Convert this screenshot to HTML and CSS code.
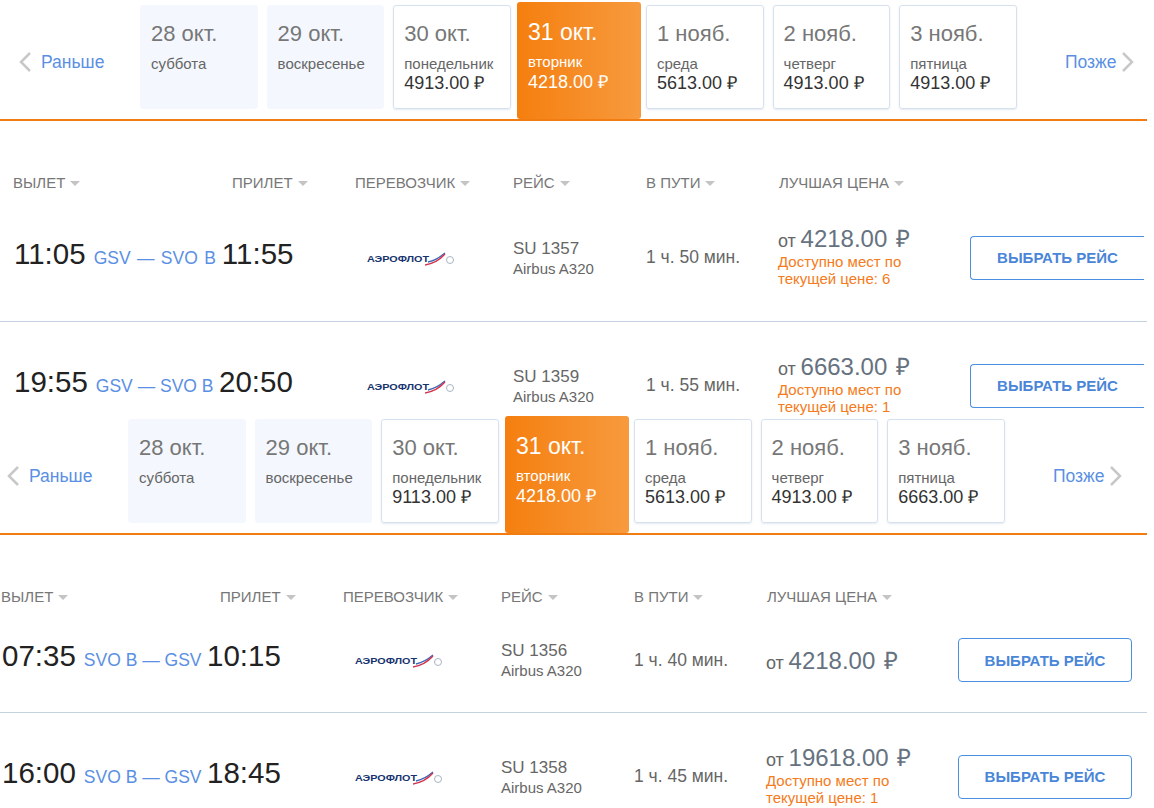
FILE: index.html
```html
<!DOCTYPE html>
<html lang="ru">
<head>
    <meta charset="UTF-8">
    <meta name="viewport" content="width=device-width, initial-scale=1.0">
    <title>Выбор рейса</title>
    <link rel="stylesheet" href="styles.css">
</head>
<body>
    <!-- GSV to SVO -->
    <section class="panel panel-top">
        <div class="strip">
            <a class="nav nav-prev"><svg class="chev" width="14" height="22" viewBox="0 0 14 22"><path d="M12 2 L3 11 L12 20"/></svg>Раньше</a>
            <div class="cards">
                <div class="card card-empty"><div class="date">28 окт.</div><div class="day">суббота</div></div>
                <div class="card card-empty"><div class="date">29 окт.</div><div class="day">воскресенье</div></div>
                <div class="card"><div class="date">30 окт.</div><div class="day">понедельник</div><div class="card-price">4913.00 ₽</div></div>
                <div class="card card-active"><div class="date">31 окт.</div><div class="day">вторник</div><div class="card-price">4218.00 ₽</div></div>
                <div class="card"><div class="date">1 нояб.</div><div class="day">среда</div><div class="card-price">5613.00 ₽</div></div>
                <div class="card"><div class="date">2 нояб.</div><div class="day">четверг</div><div class="card-price">4913.00 ₽</div></div>
                <div class="card"><div class="date">3 нояб.</div><div class="day">пятница</div><div class="card-price">4913.00 ₽</div></div>
            </div>
            <a class="nav nav-next">Позже<svg class="chev" width="14" height="22" viewBox="0 0 14 22"><path d="M2 2 L11 11 L2 20"/></svg></a>
        </div>

        <div class="head">
            <div class="col-dep">Вылет<i class="caret"></i></div>
            <div class="col-arr">Прилет<i class="caret"></i></div>
            <div class="col-carrier">Перевозчик<i class="caret"></i></div>
            <div class="col-flight">Рейс<i class="caret"></i></div>
            <div class="col-dur">В пути<i class="caret"></i></div>
            <div class="col-price">Лучшая цена<i class="caret"></i></div>
        </div>

        <div class="row">
            <div class="times"><span class="time">11:05</span><span class="route route-wide">GSV — SVO B</span><span class="time">11:55</span></div>
            <div class="carrier">
                <span class="logo"><span class="logo-name">АЭРОФЛОТ</span><svg class="logo-wing" width="30" height="14" viewBox="0 0 30 14"><path d="M3 10 Q12 8 20 1" fill="none" stroke="#3f66b8" stroke-width="1.4"/><path d="M0 13 Q12 11 20 2" fill="none" stroke="#d4344a" stroke-width="1.4"/><circle cx="25" cy="8" r="3.5" fill="none" stroke="#a9b4c2"/></svg></span>
            </div>
            <div class="flight"><div class="flight-no">SU 1357</div><div class="plane">Airbus A320</div></div>
            <div class="dur">1 ч. 50 мин.</div>
            <div class="price"><div class="price-line"><span class="from">от</span> 4218.00 <span class="rub">₽</span></div><div class="seats">Доступно мест по<br>текущей цене: 6</div></div>
            <button class="btn">ВЫБРАТЬ РЕЙС</button>
        </div>

        <div class="row">
            <div class="times"><span class="time">19:55</span><span class="route">GSV — SVO B</span><span class="time">20:50</span></div>
            <div class="carrier">
                <span class="logo"><span class="logo-name">АЭРОФЛОТ</span><svg class="logo-wing" width="30" height="14" viewBox="0 0 30 14"><path d="M3 10 Q12 8 20 1" fill="none" stroke="#3f66b8" stroke-width="1.4"/><path d="M0 13 Q12 11 20 2" fill="none" stroke="#d4344a" stroke-width="1.4"/><circle cx="25" cy="8" r="3.5" fill="none" stroke="#a9b4c2"/></svg></span>
            </div>
            <div class="flight"><div class="flight-no">SU 1359</div><div class="plane">Airbus A320</div></div>
            <div class="dur">1 ч. 55 мин.</div>
            <div class="price"><div class="price-line"><span class="from">от</span> 6663.00 <span class="rub">₽</span></div><div class="seats">Доступно мест по<br>текущей цене: 1</div></div>
            <button class="btn">ВЫБРАТЬ РЕЙС</button>
        </div>
    </section>

    <!-- SVO to GSV -->
    <section class="panel panel-bottom">
        <div class="strip">
            <a class="nav nav-prev"><svg class="chev" width="14" height="22" viewBox="0 0 14 22"><path d="M12 2 L3 11 L12 20"/></svg>Раньше</a>
            <div class="cards">
                <div class="card card-empty"><div class="date">28 окт.</div><div class="day">суббота</div></div>
                <div class="card card-empty"><div class="date">29 окт.</div><div class="day">воскресенье</div></div>
                <div class="card"><div class="date">30 окт.</div><div class="day">понедельник</div><div class="card-price">9113.00 ₽</div></div>
                <div class="card card-active"><div class="date">31 окт.</div><div class="day">вторник</div><div class="card-price">4218.00 ₽</div></div>
                <div class="card"><div class="date">1 нояб.</div><div class="day">среда</div><div class="card-price">5613.00 ₽</div></div>
                <div class="card"><div class="date">2 нояб.</div><div class="day">четверг</div><div class="card-price">4913.00 ₽</div></div>
                <div class="card"><div class="date">3 нояб.</div><div class="day">пятница</div><div class="card-price">6663.00 ₽</div></div>
            </div>
            <a class="nav nav-next">Позже<svg class="chev" width="14" height="22" viewBox="0 0 14 22"><path d="M2 2 L11 11 L2 20"/></svg></a>
        </div>

        <div class="head">
            <div class="col-dep">Вылет<i class="caret"></i></div>
            <div class="col-arr">Прилет<i class="caret"></i></div>
            <div class="col-carrier">Перевозчик<i class="caret"></i></div>
            <div class="col-flight">Рейс<i class="caret"></i></div>
            <div class="col-dur">В пути<i class="caret"></i></div>
            <div class="col-price">Лучшая цена<i class="caret"></i></div>
        </div>

        <div class="row">
            <div class="times"><span class="time">07:35</span><span class="route">SVO B — GSV</span><span class="time">10:15</span></div>
            <div class="carrier">
                <span class="logo"><span class="logo-name">АЭРОФЛОТ</span><svg class="logo-wing" width="30" height="14" viewBox="0 0 30 14"><path d="M3 10 Q12 8 20 1" fill="none" stroke="#3f66b8" stroke-width="1.4"/><path d="M0 13 Q12 11 20 2" fill="none" stroke="#d4344a" stroke-width="1.4"/><circle cx="25" cy="8" r="3.5" fill="none" stroke="#a9b4c2"/></svg></span>
            </div>
            <div class="flight"><div class="flight-no">SU 1356</div><div class="plane">Airbus A320</div></div>
            <div class="dur">1 ч. 40 мин.</div>
            <div class="price"><div class="price-line"><span class="from">от</span> 4218.00 <span class="rub">₽</span></div></div>
            <button class="btn">ВЫБРАТЬ РЕЙС</button>
        </div>

        <div class="row">
            <div class="times"><span class="time">16:00</span><span class="route">SVO B — GSV</span><span class="time">18:45</span></div>
            <div class="carrier">
                <span class="logo"><span class="logo-name">АЭРОФЛОТ</span><svg class="logo-wing" width="30" height="14" viewBox="0 0 30 14"><path d="M3 10 Q12 8 20 1" fill="none" stroke="#3f66b8" stroke-width="1.4"/><path d="M0 13 Q12 11 20 2" fill="none" stroke="#d4344a" stroke-width="1.4"/><circle cx="25" cy="8" r="3.5" fill="none" stroke="#a9b4c2"/></svg></span>
            </div>
            <div class="flight"><div class="flight-no">SU 1358</div><div class="plane">Airbus A320</div></div>
            <div class="dur">1 ч. 45 мин.</div>
            <div class="price"><div class="price-line"><span class="from">от</span> 19618.00 <span class="rub">₽</span></div><div class="seats">Доступно мест по<br>текущей цене: 1</div></div>
            <button class="btn">ВЫБРАТЬ РЕЙС</button>
        </div>
    </section>
</body>
</html>
```

FILE: styles.css
```css
body {
    margin: 0;
    background: white;
    font-family: "Liberation Sans", Arial, sans-serif;
    color: #666;
}
.panel {
    width: 1147px;
    overflow: hidden;
}
.panel-top {
    --shift: 12px;
    height: 416px;
}
.panel-bottom {
    --shift: 0px;
    height: 394px;
    margin-top: -2px;
}

/* date strip */
.strip {
    display: flex;
    align-items: flex-start;
    box-sizing: border-box;
    height: 121px;
    padding-left: calc(var(--shift) + 6px);
    border-bottom: 2px solid #f07c12;
}
.nav {
    display: flex;
    align-items: center;
    height: 22px;
    margin-top: 51px;
    color: #5a8fe3;
    font-size: 17.5px;
}
.nav-prev {
    flex: 0 0 122px;
}
.nav-next {
    margin-left: 48px;
}
.chev {
    fill: none;
    stroke: #c8c8c8;
    stroke-width: 2.5;
}
.nav-prev .chev {
    margin-right: 9px;
}
.nav-next .chev {
    margin-left: 4px;
}
.cards {
    display: flex;
    gap: 8.8px;
    padding-top: 5px;
}
.card {
    box-sizing: border-box;
    width: 117.8px;
    height: 104px;
    padding: 15px 10px 0;
    border: 1px solid #d6e1ef;
    border-radius: 3px;
    box-shadow: 0 1px 2px rgba(150, 175, 205, 0.25);
}
.card-empty {
    background: #f4f8fe;
    border-color: #f4f8fe;
    box-shadow: none;
}
.date {
    color: #777;
    font-size: 22px;
    line-height: 26px;
}
.day {
    margin-top: 9px;
    color: #666;
    font-size: 15px;
    line-height: 16px;
}
.card-price {
    margin-top: 1px;
    color: #333;
    font-size: 18px;
    line-height: 20px;
}
.card-active {
    width: 124px;
    height: 117px;
    margin: -3px -3.8px 0 -2.8px;
    padding: 17px 11px 0;
    border: 0;
    background: linear-gradient(to right, #f57f0f, #f79a3e);
    box-shadow: none;
}
.card-active .date {
    color: white;
    font-size: 23px;
}
.card-active .day,
.card-active .card-price {
    color: white;
}
.card-active .card-price {
    margin-top: 2px;
}

/* table */
.head {
    display: flex;
    height: 20px;
    margin: 52px 0 1px;
    padding-left: calc(var(--shift) + 1px);
    color: #777;
    font-size: 15px;
    line-height: 20px;
    text-transform: uppercase;
}
.col-dep {
    width: 219px;
}
.col-arr {
    width: 123px;
}
.col-carrier {
    width: 158px;
}
.col-flight,
.col-dur {
    width: 133px;
}
.caret {
    display: inline-block;
    margin-left: 5px;
    vertical-align: 2px;
    border-top: 5px solid #c4c4c4;
    border-left: 5px solid transparent;
    border-right: 5px solid transparent;
}
.row {
    display: flex;
    align-items: center;
    padding: 30px 0 30px calc(var(--shift) + 2px);
    border-bottom: 1px solid #c3d1e0;
}
.times {
    display: flex;
    align-items: baseline;
    width: 342px;
    margin-top: -8px;
}
.time {
    color: #222;
    font-size: 29.5px;
}
.route {
    margin: 0 5.5px 0 8px;
    color: #5a8fe3;
    font-size: 17.5px;
}
.route-wide {
    margin-right: 6px;
    word-spacing: 1.5px;
}
.carrier {
    width: 157px;
}
.logo {
    display: flex;
    align-items: center;
    margin: 2px 0 0 11px;
}
.logo-name {
    margin-right: 6px;
    color: #17346f;
    font-size: 9px;
    font-weight: bold;
    transform: scaleX(1.2);
    transform-origin: left center;
}
.flight {
    width: 133px;
    padding-top: 2px;
    font-size: 15px;
    line-height: 20px;
}
.flight-no {
    font-size: 17px;
}
.dur {
    width: 132px;
    font-size: 17.5px;
}
.price {
    width: 192px;
}
.price-line {
    color: #66727f;
    font-size: 24px;
    line-height: 29px;
}
.from {
    margin-right: -2px;
    color: #666;
    font-size: 18px;
    line-height: 1;
}
.rub {
    margin-left: 2px;
}
.seats {
    margin-bottom: 4px;
    color: #f47b20;
    font-size: 15px;
    line-height: 17px;
}
.btn {
    flex: none;
    width: 174px;
    height: 44px;
    padding: 0;
    border: 1px solid #4a90e2;
    border-radius: 4px;
    background: white;
    color: #4a86d8;
    font-family: inherit;
    font-size: 15px;
    font-weight: bold;
}
.panel-top .btn {
    border-right: 0;
    border-radius: 4px 0 0 4px;
}
```
